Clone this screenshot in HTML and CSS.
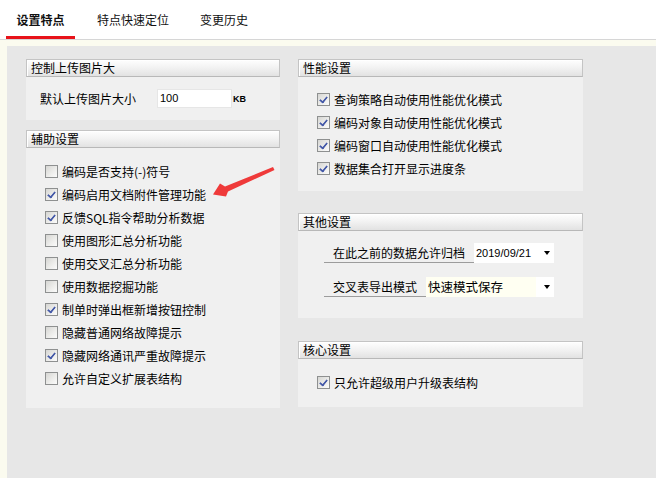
FILE: index.html
```html
<!DOCTYPE html>
<html lang="zh-CN">
<head>
<meta charset="utf-8">
<title>设置特点</title>
<link rel="stylesheet" href="styles.css">
</head>
<body>
<div class="tabs">
  <div class="tab active">设置特点</div>
  <div class="tab">特点快速定位</div>
  <div class="tab">变更历史</div>
</div>
<div class="frame">
  <div class="content">
    <div class="col col-left">
      <div class="group">
        <div class="group-head">控制上传图片大</div>
        <div class="group-body body-size">
          <span class="label">默认上传图片大小</span>
          <span class="textbox">100</span>
          <span class="unit">KB</span>
        </div>
      </div>
      <div class="group gap-10">
        <div class="group-head">辅助设置</div>
        <div class="group-body body-aux">
          <div class="row"><span class="cb"></span>编码是否支持(-)符号</div>
          <div class="row"><span class="cb on"></span>编码启用文档附件管理功能</div>
          <div class="row"><span class="cb on"></span>反馈SQL指令帮助分析数据</div>
          <div class="row"><span class="cb"></span>使用图形汇总分析功能</div>
          <div class="row"><span class="cb"></span>使用交叉汇总分析功能</div>
          <div class="row"><span class="cb"></span>使用数据挖掘功能</div>
          <div class="row"><span class="cb on"></span>制单时弹出框新增按钮控制</div>
          <div class="row"><span class="cb"></span>隐藏普通网络故障提示</div>
          <div class="row"><span class="cb on"></span>隐藏网络通讯严重故障提示</div>
          <div class="row"><span class="cb"></span>允许自定义扩展表结构</div>
        </div>
      </div>
    </div>
    <div class="col col-right">
      <div class="group">
        <div class="group-head">性能设置</div>
        <div class="group-body body-perf">
          <div class="row"><span class="cb on"></span>查询策略自动使用性能优化模式</div>
          <div class="row"><span class="cb on"></span>编码对象自动使用性能优化模式</div>
          <div class="row"><span class="cb on"></span>编码窗口自动使用性能优化模式</div>
          <div class="row"><span class="cb on"></span>数据集合打开显示进度条</div>
        </div>
      </div>
      <div class="group gap-22">
        <div class="group-head">其他设置</div>
        <div class="group-body body-other">
          <div class="frow">
            <span class="btn btn-wide">在此之前的数据允许归档</span>
            <span class="combo combo-date"><span class="combo-text num">2019/09/21</span><span class="combo-arrow"><i class="tri"></i></span></span>
          </div>
          <div class="frow frow-2">
            <span class="btn btn-narrow">交叉表导出模式</span>
            <span class="combo combo-mode"><span class="combo-text mode">快速模式保存</span><span class="combo-arrow"><i class="tri"></i></span></span>
          </div>
        </div>
      </div>
      <div class="group gap-23">
        <div class="group-head">核心设置</div>
        <div class="group-body body-core">
          <div class="row"><span class="cb on"></span>只允许超级用户升级表结构</div>
        </div>
      </div>
    </div>
  </div>
</div>
<svg class="annot" width="656" height="478" viewBox="0 0 656 478">
  <polygon points="273,167 274.5,170 228,191.5 226,196.5 213,194.5 220,183.5 225,186.5" fill="#ef3a3a"/>
</svg>
</body>
</html>
```

FILE: styles.css
```css
html, body {
  margin: 0;
  padding: 0;
}
body {
  width: 656px;
  height: 478px;
  overflow: hidden;
  background: #ffffff;
  font-family: "Noto Sans CJK SC", "Liberation Sans", sans-serif;
  font-size: 12px;
  color: #000;
  position: relative;
}
.tabs {
  height: 40px;
  box-sizing: border-box;
  border-bottom: 1px solid #d6d6d6;
  display: flex;
  padding-left: 6px;
  gap: 13px;
  background: #fff;
}
.tab {
  height: 39px;
  box-sizing: border-box;
  padding: 4px 9px 0;
  line-height: 32px;
  font-size: 12px;
  color: #111;
}
.tab.active {
  font-weight: bold;
  border-bottom: 3px solid #e8131a;
  width: 69px;
  text-align: center;
  padding: 4px 0 0;
}
.frame {
  background: #fbfbef;
  padding: 6px 0 0 7px;
  height: 438px;
  box-sizing: border-box;
}
.content {
  background: #e7e7e7;
  height: 432px;
  box-sizing: border-box;
  padding: 13px 0 0 19px;
  display: flex;
  gap: 18px;
  align-items: flex-start;
}
.col-left { width: 254px; }
.col-right { width: 285px; }
.gap-10 { margin-top: 10px; }
.gap-22 { margin-top: 22px; }
.gap-23 { margin-top: 23px; }
.group-head {
  height: 18px;
  box-sizing: border-box;
  border: 1px solid #c4c4c4;
  border-bottom-color: #b8b8b8;
  background: linear-gradient(#fefefe, #f3f3f3 45%, #e2e2e2);
  padding-left: 4px;
  line-height: 16px;
  box-shadow: inset 1px 1px 0 #ffffff;
}
.group-body {
  background: #f0f0f0;
  box-sizing: border-box;
}
.body-size {
  height: 43px;
  display: flex;
  align-items: center;
  padding-left: 14px;
}
.label {
  width: 97px;
  margin-right: 20px;
  white-space: nowrap;
}
.textbox {
  width: 75px;
  height: 19px;
  box-sizing: border-box;
  background: #fff;
  border: 1px solid #e6e6e6;
  padding-left: 2px;
  line-height: 17px;
  font-family: "Liberation Sans", sans-serif;
  font-size: 11px;
}
.unit {
  font-family: "Liberation Sans", sans-serif;
  font-size: 9px;
  font-weight: bold;
  margin-left: 1px;
}
.row {
  height: 23px;
  display: flex;
  align-items: center;
  gap: 4px;
  white-space: nowrap;
}
.body-aux { padding: 12px 0 18px 19px; }
.body-perf { padding: 11px 0 11px 19px; }
.body-core { padding: 12px 0 13px 19px; }
.cb {
  width: 13px;
  height: 13px;
  box-sizing: border-box;
  border: 1px solid #8e9090;
  background: linear-gradient(135deg, #d6d6d3, #eeeeec 60%, #fbfbfb);
  flex: none;
  position: relative;
}
.cb.on::after {
  content: "";
  position: absolute;
  left: 2px;
  top: 1px;
  width: 3px;
  height: 6px;
  border-right: 2px solid #4459a8;
  border-bottom: 2px solid #4459a8;
  transform: translate(1px, 0) rotate(40deg);
  border-radius: 0 0 1px 0;
}
.body-other { padding: 12px 0 21px 26px; }
.frow {
  display: flex;
  height: 20px;
  align-items: stretch;
}
.frow-2 { margin-top: 14px; }
.btn {
  box-sizing: border-box;
  border-bottom: 1px solid #9c9c9c;
  text-align: center;
  line-height: 20px;
  white-space: nowrap;
}
.btn-wide { width: 150px; }
.btn-narrow { width: 102px; }
.combo {
  display: flex;
  background: #fff;
}
.combo-date { width: 80px; }
.combo-mode { width: 128px; }
.combo-text {
  flex: 1;
  padding-left: 2px;
  line-height: 20px;
  white-space: nowrap;
}
.combo-text.num {
  font-family: "Liberation Sans", sans-serif;
  font-size: 11px;
}
.combo-text.mode {
  background: #fffff2;
  font-size: 12.5px;
}
.combo-arrow {
  width: 18px;
  display: flex;
  align-items: center;
  justify-content: flex-end;
  padding-right: 4px;
  box-sizing: border-box;
}
.tri {
  width: 0;
  height: 0;
  border-left: 3.5px solid transparent;
  border-right: 3.5px solid transparent;
  border-top: 4px solid #000;
}
.annot {
  position: absolute;
  left: 0;
  top: 0;
  pointer-events: none;
}
```
